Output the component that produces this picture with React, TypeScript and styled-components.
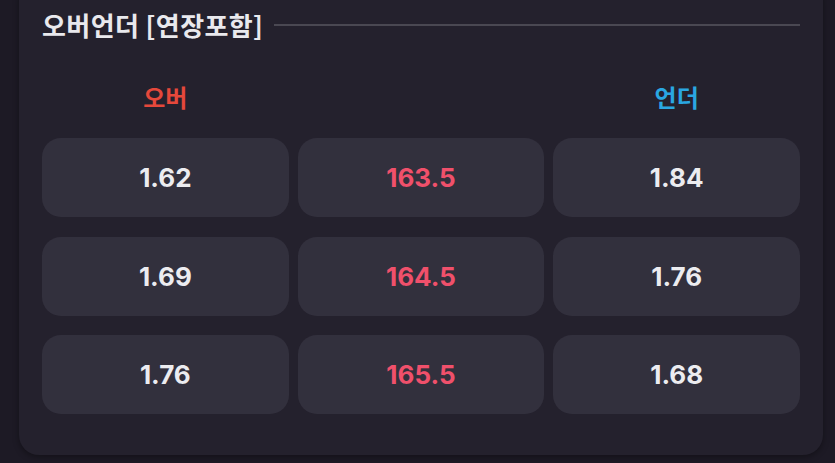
import React from "react";
import styled, { createGlobalStyle } from "styled-components";

const Global = createGlobalStyle`
  html, body { margin: 0; padding: 0; background: #1d1a25; }
  body { font-family: Inter, "Noto Sans CJK KR", "Noto Sans", sans-serif; overflow: hidden; }
`;

const Page = styled.div`
  width: 835px;
  height: 463px;
  box-sizing: border-box;
  padding: 0 12px 0 19px;
  background: #1d1a25;
  overflow: hidden;
`;

const Card = styled.section`
  margin-top: -20px;
  background: #24212d;
  border-radius: 20px;
  padding: 30px 23px 41px 23px;
  box-shadow: 0 2px 6px rgba(0, 0, 0, 0.35);
`;

const TitleRow = styled.div`
  display: flex;
  align-items: center;
  gap: 11px;
  height: 30px;
`;

const Title = styled.h2`
  margin: 0;
  font-family: "Noto Sans CJK KR", sans-serif;
  font-size: 26px;
  font-weight: 700;
  letter-spacing: 0.4px;
  color: #e9e9ed;
  line-height: 30px;
  white-space: nowrap;
`;

const Rule = styled.div`
  flex: 1;
  height: 2px;
  background: #4a4852;
`;

const HeaderRow = styled.div`
  display: grid;
  grid-template-columns: repeat(3, 1fr);
  column-gap: 9px;
  margin-top: 42px;
  height: 30px;
`;

const HeaderLabel = styled.div<{ $color: string }>`
  text-align: center;
  font-family: "Noto Sans CJK KR", sans-serif;
  font-size: 24px;
  font-weight: 700;
  line-height: 30px;
  color: ${(p) => p.$color};
`;

const Grid = styled.div`
  display: grid;
  grid-template-columns: repeat(3, 1fr);
  grid-auto-rows: 79px;
  column-gap: 9px;
  row-gap: 19.5px;
  margin-top: 26px;
`;

const Cell = styled.button<{ $accent?: boolean }>`
  border: none;
  border-radius: 19px;
  background: #32303d;
  display: flex;
  align-items: center;
  justify-content: center;
  font-family: Inter, "Noto Sans", sans-serif;
  font-size: 26px;
  font-weight: 700;
  color: ${(p) => (p.$accent ? "#f0506b" : "#ececf0")};
  padding: 0;
  cursor: pointer;
`;

const rows = [
  { over: "1.62", line: "163.5", under: "1.84" },
  { over: "1.69", line: "164.5", under: "1.76" },
  { over: "1.76", line: "165.5", under: "1.68" },
];

export default function App() {
  return (
    <>
      <Global />
      <Page>
        <Card>
          <TitleRow>
            <Title>오버언더 [연장포함]</Title>
            <Rule />
          </TitleRow>
          <HeaderRow>
            <HeaderLabel $color="#e5483b">오버</HeaderLabel>
            <div />
            <HeaderLabel $color="#2aa7e1">언더</HeaderLabel>
          </HeaderRow>
          <Grid>
            {rows.map((r) => (
              <React.Fragment key={r.line}>
                <Cell>{r.over}</Cell>
                <Cell $accent>{r.line}</Cell>
                <Cell>{r.under}</Cell>
              </React.Fragment>
            ))}
          </Grid>
        </Card>
      </Page>
    </>
  );
}
